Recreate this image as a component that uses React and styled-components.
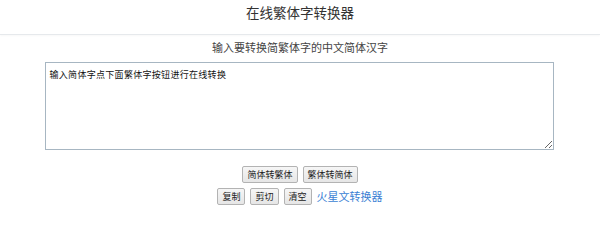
import React, { useState } from "react";
import styled, { createGlobalStyle } from "styled-components";

const Global = createGlobalStyle`
  html, body { margin: 0; padding: 0; background: #fff; }
  body { font-family: "Noto Sans CJK SC", "Noto Sans", sans-serif; color: #333; }
`;

const Header = styled.header`
  height: 35px;
  box-sizing: border-box;
  border-bottom: 1px solid #e6e9ec;
  box-shadow: 0 1px 2px rgba(0, 0, 0, 0.03);
  display: flex;
  justify-content: center;
`;

const Title = styled.h1`
  margin: 0;
  font-size: 13.5px;
  font-weight: 400;
  line-height: 25px;
  color: #333;
`;

const Main = styled.main`
  display: flex;
  flex-direction: column;
  align-items: center;
`;

const Subtitle = styled.h2`
  margin: 0 0 3px;
  font-size: 11px;
  font-weight: 400;
  line-height: 24px;
  color: #444;
`;

const TextArea = styled.textarea`
  width: 509px;
  height: 88px;
  box-sizing: border-box;
  border: 1px solid #a7b6c2;
  padding: 5px 4px;
  margin: 0 2px 0 0;
  font-family: "Noto Sans CJK SC", sans-serif;
  font-size: 9px;
  letter-spacing: 0.3px;
  line-height: 14px;
  color: #111;
  font-weight: 400;
  outline: none;
  resize: both;
`;

const Row = styled.div`
  display: flex;
  align-items: center;
  gap: 5px;
  margin-top: ${(p) => p.$top}px;
`;

const Button = styled.button`
  height: 17px;
  box-sizing: border-box;
  padding: 0 4px;
  border: 1px solid #b3b3b3;
  border-radius: 2px;
  background: linear-gradient(#f6f6f6, #e6e6e6);
  font-family: "Noto Sans CJK SC", sans-serif;
  font-size: 9px;
  line-height: 15px;
  color: #222;
  cursor: pointer;
`;

const Link = styled.a`
  font-size: 11px;
  line-height: 17px;
  color: #3b7fd4;
  text-decoration: none;
`;

export default function App() {
  const [text, setText] = useState("输入简体字点下面繁体字按钮进行在线转换");
  return (
    <>
      <Global />
      <Header>
        <Title>在线繁体字转换器</Title>
      </Header>
      <Main>
        <Subtitle>输入要转换简繁体字的中文简体汉字</Subtitle>
        <TextArea value={text} onChange={(e) => setText(e.target.value)} />
        <Row $top={16}>
          <Button>简体转繁体</Button>
          <Button>繁体转简体</Button>
        </Row>
        <Row $top={5}>
          <Button>复制</Button>
          <Button>剪切</Button>
          <Button>清空</Button>
          <Link href="#">火星文转换器</Link>
        </Row>
      </Main>
    </>
  );
}
